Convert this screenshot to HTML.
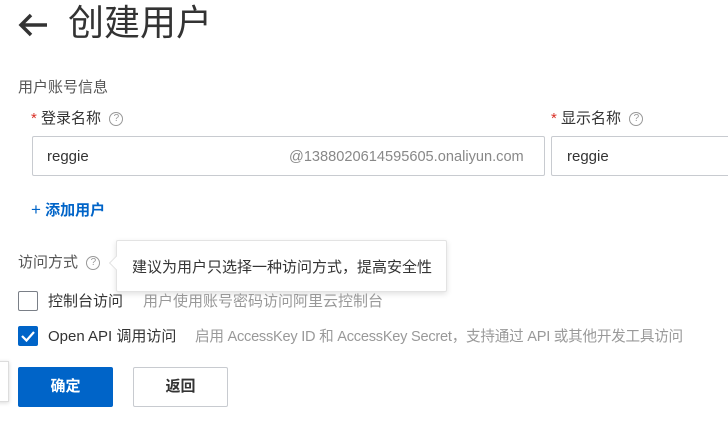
<!DOCTYPE html>
<html><head><meta charset="utf-8"><style>
body{margin:0;width:728px;height:427px;background:#fff;position:relative;overflow:hidden;font-family:"Liberation Sans","Noto Sans CJK SC",sans-serif;color:#333}
.a{position:absolute;white-space:nowrap}
.inp{position:absolute;border:1px solid #c8cbd0;border-radius:2px;box-sizing:border-box;background:#fff}
.q{display:inline-block;width:12px;height:12px;border:1px solid #999;border-radius:50%;font-size:10px;line-height:12px;text-align:center;color:#999;vertical-align:middle}
.star{color:#d93026}
</style></head><body>
<svg class="a" style="left:17px;top:12px" width="32" height="26" viewBox="0 0 32 26"><path d="M14 3 L4 13 L14 23 M4 13 H30" stroke="#333" stroke-width="3.5" fill="none"/></svg>
<div class="a" style="left:68px;top:0px;font-size:36px;line-height:46px;color:#333">创建用户</div>
<div class="a" style="left:18px;top:78px;font-size:15px;line-height:20px;color:#555">用户账号信息</div>
<div class="a" style="left:31px;top:109px;font-size:15px;line-height:20px"><span class="star">*</span> 登录名称 &nbsp;<span class="q">?</span></div>
<div class="inp" style="left:32px;top:136px;width:513px;height:40px"></div>
<div class="a" style="left:47px;top:147px;font-size:15px;line-height:20px">reggie</div>
<div class="a" style="left:289px;top:147px;font-size:14.6px;line-height:20px;color:#888">@1388020614595605.onaliyun.com</div>
<div class="a" style="left:551px;top:109px;font-size:15px;line-height:20px"><span class="star">*</span> 显示名称 &nbsp;<span class="q">?</span></div>
<div class="inp" style="left:551px;top:136px;width:200px;height:40px"></div>
<div class="a" style="left:567px;top:147px;font-size:15px;line-height:20px">reggie</div>
<div class="a" style="left:31px;top:199px;font-size:15px;line-height:22px;color:#0064c8;font-weight:bold"><span style="font-weight:normal;font-size:17px">+</span> 添加用户</div>
<div class="a" style="left:18px;top:253px;font-size:15px;line-height:20px;color:#555">访问方式 &nbsp;<span class="q">?</span></div>
<div class="a" style="left:116px;top:240px;width:331px;height:52px;border:1px solid #e3e3e3;border-radius:2px;background:#fff;box-shadow:0 2px 6px rgba(0,0,0,.12);box-sizing:border-box"></div>
<div class="a" style="left:111px;top:258px;width:9px;height:9px;background:#fff;border-left:1px solid #e3e3e3;border-bottom:1px solid #e3e3e3;transform:rotate(45deg)"></div>
<div class="a" style="left:132px;top:258px;font-size:15px;line-height:20px">建议为用户只选择一种访问方式，提高安全性</div>
<div class="a" style="left:18px;top:291px;width:20px;height:20px;border:1px solid #7a7f87;border-radius:2px;box-sizing:border-box"></div>
<div class="a" style="left:48px;top:292px;font-size:15px;line-height:20px">控制台访问</div>
<div class="a" style="left:143px;top:292px;font-size:15px;line-height:20px;color:#999">用户使用账号密码访问阿里云控制台</div>
<div class="a" style="left:18px;top:326px;width:20px;height:20px;background:#0064c8;border-radius:2px"><svg width="20" height="20"><path d="M4 10 L8.5 14.5 L16 6" stroke="#fff" stroke-width="2.2" fill="none"/></svg></div>
<div class="a" style="left:48px;top:327px;font-size:15px;line-height:20px">Open API 调用访问</div>
<div class="a" style="left:195px;top:327px;font-size:14.6px;letter-spacing:-0.25px;line-height:20px;color:#999">启用 AccessKey ID 和 AccessKey Secret，支持通过 API 或其他开发工具访问</div>
<div class="a" style="left:-4px;top:361px;width:11px;height:39px;border:1px solid #ddd;background:#fff;box-shadow:0 1px 4px rgba(0,0,0,.15)"></div>
<div class="a" style="left:18px;top:367px;width:95px;height:40px;background:#0064c8;border-radius:2px;color:#fff;font-size:15px;font-weight:bold;line-height:40px;text-align:center">确定</div>
<div class="a" style="left:133px;top:367px;width:95px;height:40px;border:1px solid #c8cbd0;box-sizing:border-box;border-radius:2px;font-size:15px;font-weight:bold;line-height:38px;text-align:center">返回</div>
</body></html>
